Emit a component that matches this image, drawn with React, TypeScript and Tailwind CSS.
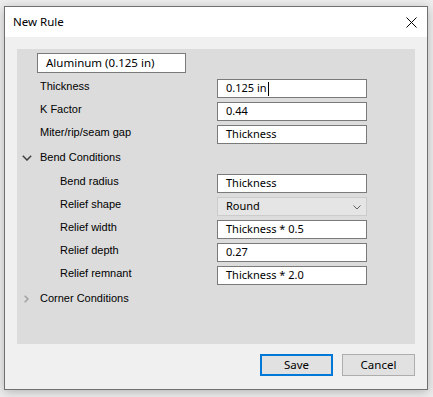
import React from 'react';

const ui = { fontFamily: '"Noto Sans", "Open Sans", sans-serif' };
const lbl = { fontFamily: '"Liberation Sans", Arial, sans-serif' };

type Field = { label: string; value: string; kind?: 'select' | 'caret' };

const topFields: Field[] = [
  { label: 'Thickness', value: '0.125 in', kind: 'caret' },
  { label: 'K Factor', value: '0.44' },
  { label: 'Miter/rip/seam gap', value: 'Thickness' },
];

const bendFields: Field[] = [
  { label: 'Bend radius', value: 'Thickness' },
  { label: 'Relief shape', value: 'Round', kind: 'select' },
  { label: 'Relief width', value: 'Thickness * 0.5' },
  { label: 'Relief depth', value: '0.27' },
  { label: 'Relief remnant', value: 'Thickness * 2.0' },
];

const FieldRow: React.FC<{ field: Field; indent?: boolean }> = ({ field, indent }) => (
  <div className="flex h-[19px]">
    <div
      className={`${indent ? 'pl-[43px] w-[200px]' : 'pl-[23px] w-[200px]'} self-start text-[11px] leading-[14px] text-black`}
      style={lbl}
    >
      {field.label}
    </div>
    {field.kind === 'select' ? (
      <div
        className="flex h-[19px] w-[150px] items-center justify-between border border-[#cccccc] bg-[#e5e5e5] pl-[8px] pr-[5px] text-[11px] text-black"
        style={ui}
      >
        <span>{field.value}</span>
        <svg width="8" height="5" viewBox="0 0 8 5" className="mt-[1px]">
          <path d="M0.5 0.5 L4 4 L7.5 0.5" fill="none" stroke="#606060" strokeWidth="1" />
        </svg>
      </div>
    ) : (
      <div
        className="flex h-[19px] w-[150px] items-center border border-[#7a7a7a] bg-white pl-[8px] text-[11px] text-black"
        style={ui}
      >
        <span>{field.value}</span>
        {field.kind === 'caret' && <span className="ml-[1px] inline-block h-[14px] w-px bg-black" />}
      </div>
    )}
  </div>
);

const App: React.FC = () => {
  return (
    <div className="h-[397px] w-[433px] bg-[#eeeeee] pl-[4px] pt-[6px]">
      <div className="flex h-[384px] w-[424px] flex-col border border-[#707070] bg-[#f0f0f0] shadow-[0_2px_10px_rgba(0,0,0,0.25)]">
        {/* title bar */}
        <div className="flex h-[30px] shrink-0 items-center justify-between bg-white pl-[8px] pr-[10px]">
          <span className="text-[11.5px] text-black" style={ui}>
            New Rule
          </span>
          <svg width="11" height="11" viewBox="0 0 11 11">
            <path d="M0.5 0.5 L10.5 10.5 M10.5 0.5 L0.5 10.5" stroke="#000" strokeWidth="1" />
          </svg>
        </div>

        <div className="flex flex-1 flex-col px-[12px] pt-[12px] pb-[13px]">
          {/* settings panel */}
          <div className="flex h-[295px] flex-col bg-[#dcdcdc] pt-[4px]">
            <div
              className="ml-[20px] flex h-[20px] w-[149px] items-center border border-[#7a7a7a] bg-white pl-[8px] text-[11.5px] text-black"
              style={ui}
            >
              Aluminum (0.125 in)
            </div>

            <div className="mt-[6px] flex flex-col gap-[4px]">
              {topFields.map((f) => (
                <FieldRow key={f.label} field={f} />
              ))}
            </div>

            <div className="mt-[4px] flex h-[19px] items-center text-[11px] text-black" style={lbl}>
              <svg width="10" height="6" viewBox="0 0 10 6" className="ml-[5px] mr-[8px]">
                <path d="M0.8 0.8 L5 5 L9.2 0.8" fill="none" stroke="#404040" strokeWidth="1.5" />
              </svg>
              Bend Conditions
            </div>

            <div className="mt-[7px] flex flex-col gap-[4px]">
              {bendFields.map((f) => (
                <FieldRow key={f.label} field={f} indent />
              ))}
            </div>

            <div className="mt-[4px] flex h-[19px] items-center text-[11px] text-black" style={lbl}>
              <svg width="5" height="8" viewBox="0 0 5 8" className="ml-[7px] mr-[11px]">
                <path d="M0.7 0.7 L4 4 L0.7 7.3" fill="none" stroke="#a0a0a0" strokeWidth="1.5" />
              </svg>
              Corner Conditions
            </div>
          </div>

          {/* buttons */}
          <div className="mt-auto flex justify-end gap-[9px]">
            <button
              className="flex h-[22px] w-[73px] items-center justify-center border-2 border-[#0078d7] bg-[#e1e1e1] text-[11.5px] text-black"
              style={ui}
            >
              Save
            </button>
            <button
              className="flex h-[22px] w-[73px] items-center justify-center border border-[#adadad] bg-[#e1e1e1] text-[11.5px] text-black"
              style={ui}
            >
              Cancel
            </button>
          </div>
        </div>
      </div>
    </div>
  );
};

export default App;
